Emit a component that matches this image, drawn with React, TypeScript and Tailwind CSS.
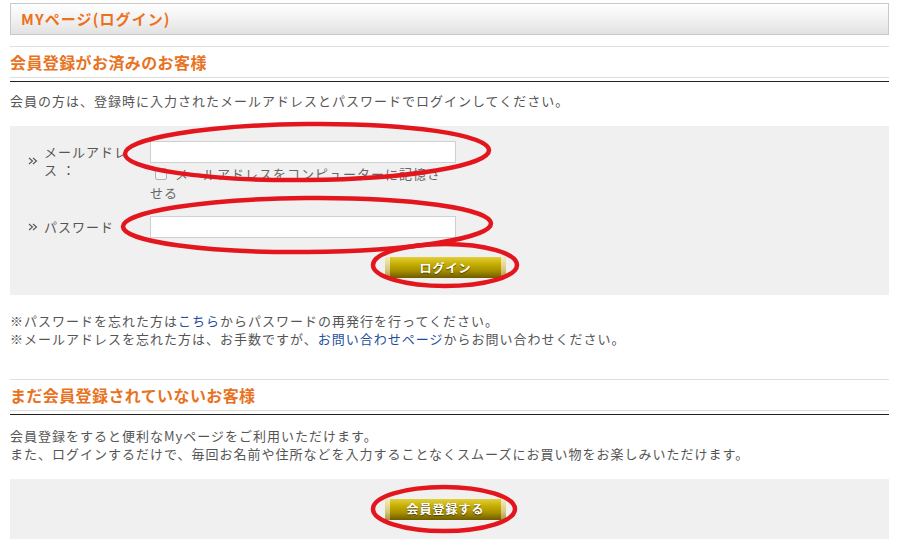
const font = {
  fontFamily: '"Noto Sans CJK JP", "Noto Sans", sans-serif',
};

function Chevrons() {
  return (
    <span className="w-[16px] flex items-center">
      <svg width="10" height="8" viewBox="0 0 10 8">
        <path d="M1 1 L4.5 4 L1 7 M5 1 L8.5 4 L5 7" fill="none" stroke="#555" strokeWidth="1.1" />
      </svg>
    </span>
  );
}

function GoldButton({ label }: { label: string }) {
  return (
    <div className="relative h-[21px] w-[121px] rounded-[3px] bg-[linear-gradient(to_bottom,#e2cf3a_0%,#c4ad00_35%,#a89000_65%,#6e5c00_100%)] flex items-center justify-center">
      <span className="absolute left-0 top-0 h-full w-[5px] rounded-l-[3px] bg-[linear-gradient(to_bottom,#f6eec0,#d9c878_60%,#a8964a)]" />
      <span className="absolute right-0 top-0 h-full w-[5px] rounded-r-[3px] bg-[linear-gradient(to_bottom,#f6eec0,#d9c878_60%,#a8964a)]" />
      <span className="relative text-[12px] font-bold text-white tracking-[1px] [text-shadow:0_1px_1px_#4a3c00]">
        {label}
      </span>
    </div>
  );
}

function SectionTitle({ title }: { title: string }) {
  return (
    <div>
      <div className="border-t border-[#dedede] h-[31px] flex items-center">
        <h2 className="text-[16px] font-bold text-[#e8731f] tracking-[0.4px]">
          {title}
        </h2>
      </div>
      <div className="border-t border-[#dedede]" />
      <div className="mt-[3px] border-t border-[#222]" />
    </div>
  );
}

export default function App() {
  return (
    <div className="relative w-[897px] h-[560px] bg-white overflow-hidden" style={font}>
      <div className="ml-[10px] w-[879px] pt-[3px] text-[13px] text-[#555] tracking-[1px] leading-[18px]">
        {/* Header */}
        <div className="h-[32px] border border-[#c9c9c9] bg-[linear-gradient(to_bottom,#ffffff,#f3f3f3_45%,#e2e2e2)] flex items-center pl-[10px]">
          <h1 className="text-[15px] font-bold text-[#ec711c] tracking-[1.1px]">
            MYページ(ログイン)
          </h1>
        </div>

        {/* Login section */}
        <div className="mt-[11px]">
          <SectionTitle title="会員登録がお済みのお客様" />
        </div>
        <p className="mt-[10px]">
          会員の方は、登録時に入力されたメールアドレスとパスワードでログインしてください。
        </p>

        <div className="mt-[16px] h-[169px] bg-[#f0f0f0] pt-[15px] pl-[18px]">
          <div className="flex items-start">
            <div className="w-[122px] flex items-center pt-[2px]">
              <Chevrons />
              <span className="leading-[18px]">
                メールアドレ
                <br />ス ：
              </span>
            </div>
            <div>
              <div className="w-[306px] h-[22px] bg-white border border-[#cfcfcf]" />
              <div className="mt-[1px] leading-[19px] text-[#666]">
                <span className="inline-block align-[-1px] ml-[5px] mr-[8px] w-[12px] h-[12px] rounded-[2px] border border-[#b0b0b0] bg-[#f4f4f4]" />
                メールアドレスをコンピューターに記憶さ
                <br />
                せる
              </div>
            </div>
          </div>

          <div className="flex items-center mt-[14px]">
            <div className="w-[122px] flex items-center">
              <Chevrons />
              <span>パスワード ：</span>
            </div>
            <div className="w-[306px] h-[22px] bg-white border border-[#cfcfcf]" />
          </div>

          <div className="mt-[19px] ml-[357px]">
            <GoldButton label="ログイン" />
          </div>
        </div>

        <div className="mt-[17px]">
          <p>
            ※パスワードを忘れた方は<span className="text-[#1f4f9c]">こちら</span>からパスワードの再発行を行ってください。
          </p>
          <p>
            ※メールアドレスを忘れた方は、お手数ですが、
            <span className="text-[#1f4f9c]">お問い合わせページ</span>
            からお問い合わせください。
          </p>
        </div>

        {/* Register section */}
        <div className="mt-[31px]">
          <SectionTitle title="まだ会員登録されていないお客様" />
        </div>
        <div className="mt-[12px]">
          <p>会員登録をすると便利なMyページをご利用いただけます。</p>
          <p>
            また、ログインするだけで、毎回お名前や住所などを入力することなくスムーズにお買い物をお楽しみいただけます。
          </p>
        </div>

        <div className="mt-[16px] h-[60px] bg-[#f0f0f0] flex items-center pl-[375px]">
          <GoldButton label="会員登録する" />
        </div>
      </div>

      {/* red annotation marks */}
      <svg
        className="absolute left-0 top-0 pointer-events-none"
        width="897"
        height="560"
        viewBox="0 0 897 560"
      >
        <g fill="none" stroke="#e3161e" strokeWidth="4.5">
          <ellipse cx="307" cy="152" rx="182" ry="28" transform="rotate(-0.6 307 152)" />
          <ellipse cx="307" cy="225" rx="184" ry="27" transform="rotate(-0.5 307 225)" />
          <ellipse cx="445" cy="265" rx="72" ry="21" />
          <ellipse cx="444" cy="509" rx="71" ry="22" />
        </g>
      </svg>
    </div>
  );
}
